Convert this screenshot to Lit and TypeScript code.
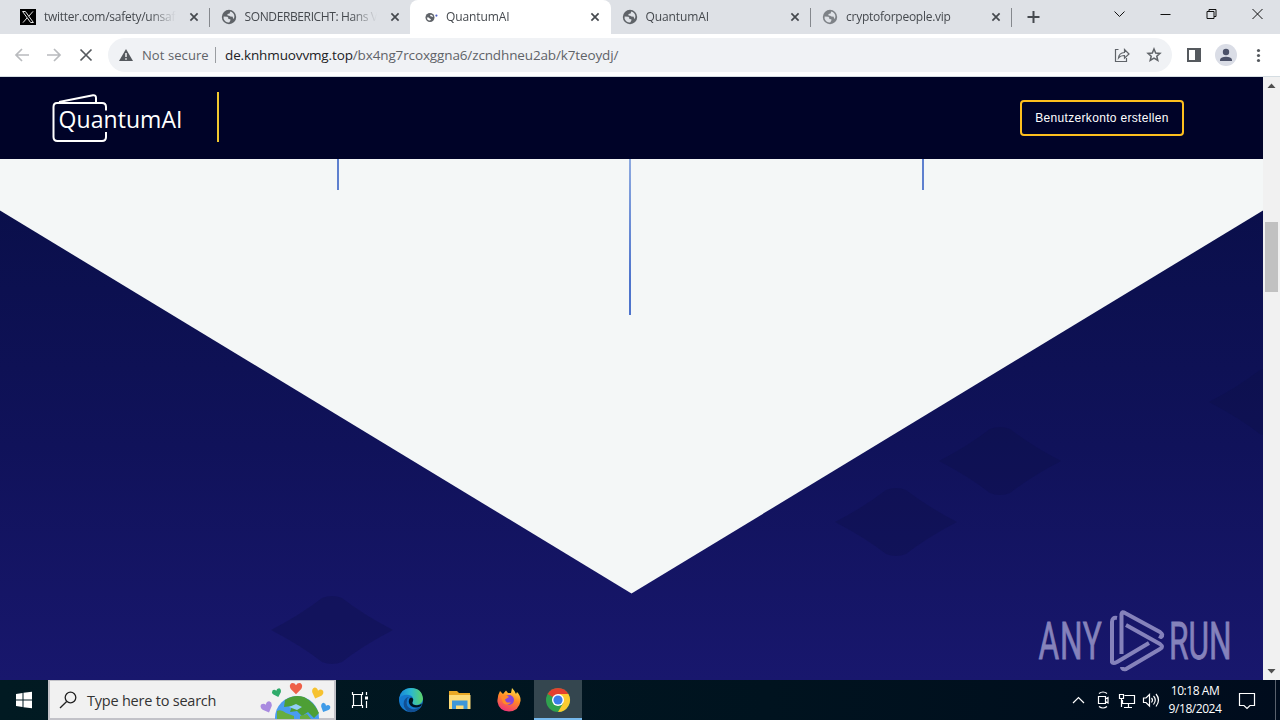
import { LitElement, css, html, svg, nothing } from 'lit';
import { customElement, property } from 'lit/decorators.js';
import { classMap } from 'lit/directives/class-map.js';

const globe = html`
  <svg class="icon" width="16" height="16" viewBox="0 0 16 16">
    <circle cx="8" cy="8" r="7.2" fill="#5f6368" />
    <path
      d="M2.6 7.6 L6.4 7.8 Q7.6 8.6 7.4 10 L9.4 10.2 Q9.8 11.8 8.2 13.4 Q4 13.6 2.6 9.8 Z"
      fill="#dee1e6"
    />
    <path
      d="M9.2 2.6 Q12.6 3.4 13.4 7 Q13.4 9 12.6 10 Q11.6 9 11.8 7.8 L9.4 7.6 Q8.4 6.4 6.6 6.4 L6.4 5 L8.6 4.6 Z"
      fill="#dee1e6"
    />
  </svg>
`;

const xLogo = html`
  <svg class="icon" width="16" height="16" viewBox="0 0 16 16">
    <rect width="16" height="16" fill="#000" />
    <path d="M2.6 2.5 H5.4 L13.4 13.5 H10.6 Z" fill="#000" stroke="#fff" stroke-width="0.9" />
    <path d="M13 2.4 L8.8 7.2 M7 9 L3 13.6" stroke="#fff" stroke-width="0.9" />
  </svg>
`;

const loading = html`
  <svg class="icon" width="16" height="16" viewBox="0 0 16 16">
    <circle cx="6" cy="8.5" r="4.5" fill="#5f6368" />
    <path d="M2.8 8.6 L4.8 8.4 Q5.8 9 5.8 9.8 L7 10 Q6.6 11.6 5.6 11.6 Q3 11.2 2.8 8.6 Z" fill="#fff" />
    <path d="M6.8 5.4 Q9 6 9.2 8 L7.6 7.6 L6 7 Z" fill="#fff" />
    <circle cx="12.4" cy="6.6" r="1.1" fill="#4d5fc4" />
  </svg>
`;

@customElement('browser-tab')
export class BrowserTab extends LitElement {
  static styles = css`
    :host {
      display: block;
      width: 200.5px;
      height: 34px;
      flex: none;
    }
    .tab {
      box-sizing: border-box;
      display: flex;
      align-items: center;
      height: 34px;
      padding-left: 11px;
      color: #45494e;
    }
    .active {
      background: #fff;
      border-radius: 8px 8px 0 0;
      padding-left: 14px;
    }
    .active .title {
      width: 131px;
      margin-left: 6px;
    }
    .favicon {
      display: flex;
      flex: none;
    }
    .faded {
      opacity: 0.75;
    }
    .title {
      width: 132px;
      margin-left: 8px;
      white-space: nowrap;
      font: 12px/16px 'Open Sans', sans-serif;
      letter-spacing: var(--spacing, 0);
      -webkit-mask-image: linear-gradient(90deg, #000 80%, transparent);
    }
    .close {
      flex: none;
      margin-left: 13px;
    }
    .divider {
      width: 1px;
      height: 19px;
      margin-left: 10px;
      background: #85888d;
    }
  `;

  @property()
  label = '';

  @property()
  kind = 'globe';

  @property({type: Boolean})
  active = false;

  @property({type: Boolean})
  divider = false;

  render() {
    const icon = this.kind === 'x' ? xLogo : this.kind === 'loading' ? loading : globe;
    return html`
      <div class="${classMap({tab: true, active: this.active})}">
        <span class="${classMap({favicon: true, faded: this.kind === 'dim'})}">${icon}</span>
        <span class="title">${this.label}</span>
        <svg class="close" width="10" height="10" viewBox="0 0 10 10">
          <path d="M1.4 1.4 L8.6 8.6 M8.6 1.4 L1.4 8.6" stroke="#45494e" stroke-width="1.7" />
        </svg>
        ${this.divider ? html`<span class="divider"></span>` : nothing}
      </div>
    `;
  }
}

@customElement('browser-chrome')
export class BrowserChrome extends LitElement {
  static styles = css`
    :host {
      display: block;
      font-family: 'Open Sans', sans-serif;
    }
    .strip {
      display: flex;
      height: 34px;
      padding-left: 9px;
      background: #dee1e6;
    }
    .loose {
      --spacing: -0.1px;
    }
    .tight {
      --spacing: -0.26px;
    }
    .tighter {
      --spacing: -0.38px;
    }
    .controls {
      flex: 1;
    }
    .toolbar {
      box-sizing: border-box;
      display: flex;
      align-items: center;
      height: 43px;
      background: #fff;
      border-bottom: 1px solid #d5dde2;
    }
    .nav {
      width: 108px;
      height: 42px;
      flex: none;
    }
    .omnibox {
      box-sizing: border-box;
      display: flex;
      align-items: center;
      width: 1064px;
      height: 34px;
      padding: 0 10px;
      border-radius: 17px;
      background: #f0f2f5;
      color: #5f6368;
      line-height: 20px;
      white-space: nowrap;
    }
    .secure {
      width: 67px;
      margin-left: 8px;
      font-size: 13px;
      letter-spacing: 0.08px;
    }
    .bar {
      width: 1px;
      height: 16px;
      margin: 0 9px 0 6px;
      background: #9a9da1;
    }
    .url {
      flex: 1;
      font-size: 13.5px;
      letter-spacing: -0.13px;
    }
    .host {
      color: #202124;
    }
    .tools {
      flex: none;
    }
  `;

  render() {
    return html`
      <div class="strip">
        <browser-tab class="tight" kind="x" label="twitter.com/safety/unsaf" divider></browser-tab>
        <browser-tab class="tighter" label="SONDERBERICHT: Hans V"></browser-tab>
        <browser-tab class="loose" kind="loading" label="QuantumAI" active></browser-tab>
        <browser-tab class="loose" label="QuantumAI" divider></browser-tab>
        <browser-tab class="tight" kind="dim" label="cryptoforpeople.vip" divider></browser-tab>
        <svg class="controls" height="34" viewBox="1011.5 0 268.5 34" fill="none" stroke="#111" stroke-width="1">
          <path d="M1027 17 H1039 M1033 11 V23" stroke="#45494e" stroke-width="2" />
          <path d="M1114 11.5 L1119 16.5 L1124 11.5" />
          <path d="M1160 14.5 H1170" />
          <path d="M1206.5 11.5 H1213.5 V18.5 H1206.5 Z M1208.5 11.5 V9.5 H1215.5 V16.5 H1213.5" />
          <path d="M1252 9 L1262 19 M1262 9 L1252 19" />
        </svg>
      </div>
      <div class="toolbar">
        <svg class="nav" viewBox="0 34 108 42" fill="none" stroke="#b9bbbe" stroke-width="1.7">
          <path d="M29 55 H16 M22 49 L16 55 L22 61" />
          <path d="M47 55 H60 M54 49 L60 55 L54 61" />
          <path d="M80.5 49.5 L91.5 60.5 M91.5 49.5 L80.5 60.5" stroke="#55595e" />
        </svg>
        <div class="omnibox">
          <svg width="16" height="16" viewBox="0 0 16 16">
            <path d="M8 2 L15 14 H1 Z" fill="#55595e" />
            <path d="M8 6 V10 M8 11.2 V12.8" stroke="#fff" stroke-width="1.4" />
          </svg>
          <span class="secure">Not secure</span>
          <span class="bar"></span>
          <span class="url"><span class="host">de.knhmuovvmg.top</span>/bx4ng7rcoxggna6/zcndhneu2ab/k7teoydj/</span>
          <svg class="tools" width="48" height="20" viewBox="1114 45 48 20" fill="none" stroke="#5f6368" stroke-width="1.2">
            <path d="M1118.5 49.5 H1115.5 V61.5 H1126.5 V58" />
            <path d="M1118.5 58 Q1119 52.8 1124.5 52.5 V49.5 L1129 54 L1124.5 58.2 V55.5 Q1120.5 55.3 1118.5 58 Z" />
            <path
              d="M1154 49 L1155.7 53 L1160 53.4 L1156.8 56.2 L1157.8 60.5 L1154 58.2 L1150.2 60.5 L1151.2 56.2 L1148 53.4 L1152.3 53 Z"
              stroke-width="1.5"
            />
          </svg>
        </div>
        <svg width="108" height="42" viewBox="1172 34 108 42">
          <path d="M1188 49 H1200 V61 H1188 Z" fill="none" stroke="#55595e" stroke-width="2" />
          <rect x="1195" y="49" width="5" height="12" fill="#55595e" />
          <circle cx="1226" cy="55" r="11" fill="#dadde6" />
          <circle cx="1226" cy="52" r="3.2" fill="#4b5168" />
          <path d="M1220 61 V59.5 Q1221 56.7 1226 56.7 Q1231 56.7 1232 59.5 V61 Z" fill="#4b5168" />
          <circle cx="1258.5" cy="50.5" r="1.6" fill="#55595e" />
          <circle cx="1258.5" cy="55.5" r="1.6" fill="#55595e" />
          <circle cx="1258.5" cy="60.5" r="1.6" fill="#55595e" />
        </svg>
      </div>
    `;
  }
}

// Centre points of the dark background rhombi
const rhombi = [[1000, 461], [896, 522], [332, 630], [1270, 402]];

@customElement('landing-page')
export class LandingPage extends LitElement {
  static styles = css`
    :host {
      display: flex;
      height: 603px;
    }
    .page {
      position: relative;
      width: 1263px;
      height: 603px;
      overflow: hidden;
    }
    .header {
      box-sizing: border-box;
      display: flex;
      align-items: center;
      justify-content: space-between;
      height: 82px;
      padding: 0 79px 0 49px;
      background: #000328;
    }
    .brand {
      display: flex;
      align-items: center;
      height: 50px;
      margin-bottom: 2px;
      padding-right: 34px;
      border-right: 2px solid #f0c72f;
    }
    .logo {
      display: block;
      font-family: 'Open Sans', sans-serif;
    }
    .button {
      box-sizing: border-box;
      width: 164px;
      height: 36px;
      padding: 0;
      border: 2px solid #fdbf1e;
      border-radius: 4px;
      background: transparent;
      color: #fff;
      font: 12px 'Liberation Sans', sans-serif;
      letter-spacing: 0.32px;
    }
    .scene {
      display: block;
    }
    .watermark {
      position: absolute;
      left: 1037px;
      top: 530px;
    }
    .scrollbar {
      box-sizing: border-box;
      display: flex;
      flex-direction: column;
      align-items: center;
      width: 17px;
      background: #f1f1f1;
    }
    .scrollbar svg {
      flex: none;
    }
    .thumb {
      width: 13px;
      height: 70px;
      flex: none;
      margin: 128px 0 371px;
      background: #c1c1c1;
    }
  `;

  render() {
    return html`
      <div class="page">
        <div class="header">
          <div class="brand">
            <svg class="logo" width="134" height="50" viewBox="49 92 134 50">
              <g fill="none" stroke="#fff" stroke-width="2" stroke-linejoin="round">
                <path d="M106 110.5 V107 Q106 103 102 103 H57 Q53.5 103 53.5 107 V137 Q53.5 141 57.5 141 H102 Q106 141 106 137 V132" />
                <path d="M59 102 L93 95.2 Q96 94.8 96 98 V102" />
              </g>
              <text x="58.5" y="128" font-size="23" textLength="124" fill="#fff">QuantumAI</text>
            </svg>
          </div>
          <button class="button">Benutzerkonto erstellen</button>
        </div>
        <svg class="scene" width="1263" height="521" viewBox="0 159 1263 521">
          <defs>
            <linearGradient id="night" x1="0" y1="0" x2="0" y2="1">
              <stop offset="0.1" stop-color="#0a0f4b" />
              <stop offset="0.55" stop-color="#10125a" />
              <stop offset="1" stop-color="#18176d" />
            </linearGradient>
            <linearGradient id="beam" gradientUnits="userSpaceOnUse" x1="0" y1="159" x2="0" y2="280">
              <stop offset="0" stop-color="#8daae0" />
              <stop offset="1" stop-color="#4e74cc" />
            </linearGradient>
          </defs>
          <rect y="159" width="1263" height="521" fill="url(#night)" />
          ${rhombi.map(([x, y]) => svg`
            <path
              d="M${x - 61} ${y} Q${x - 32} ${y - 15} ${x - 10} ${y - 32} Q${x} ${y - 36} ${x + 10} ${y - 32} Q${x + 32} ${y - 15} ${x + 61} ${y} Q${x + 32} ${y + 15} ${x + 10} ${y + 32} Q${x} ${y + 36} ${x - 10} ${y + 32} Q${x - 32} ${y + 15} ${x - 61} ${y} Z"
              fill="#0c0f45" fill-opacity="0.33"
            />
          `)}
          <polygon points="0,159 1263,159 1263,210.5 631.5,593.5 0,210.5" fill="#f4f7f7" />
          <rect x="337" y="159" width="2" height="31" fill="#5e80cf" />
          <rect x="629" y="159" width="2" height="156" fill="url(#beam)" />
          <rect x="922" y="159" width="2" height="31" fill="#5e80cf" />
        </svg>
        <svg class="watermark" width="196" height="66" viewBox="1037 607 196 66" fill="none" stroke="#8582bb" stroke-width="4">
          <g fill="#8582bb" stroke="#8582bb" stroke-width="0.8" font-family="Roboto, sans-serif" font-size="51">
            <text transform="translate(1038.5 659) scale(0.62 1)" textLength="102">ANY</text>
            <text transform="translate(1169 659) scale(0.62 1)" textLength="101">RUN</text>
          </g>
          <g stroke-linejoin="round">
            <path d="M1117 618 Q1112 617 1112 622 V662 Q1113 664 1117 662 L1149 643" />
            <path d="M1121.5 654 V614 Q1122 611 1125 613 L1160 632 Q1164 635 1161 637 L1159 636" />
            <path d="M1126 625 L1160 644 Q1164 647 1160 649 L1126 669 Q1122 670 1122 667" />
          </g>
        </svg>
      </div>
      <div class="scrollbar">
        <svg width="17" height="17" viewBox="0 0 17 17"><path d="M8.5 6.5 L12.5 11 H4.5 Z" fill="#505050" /></svg>
        <span class="thumb"></span>
        <svg width="17" height="17" viewBox="0 0 17 17"><path d="M8.5 10.5 L12.5 6 H4.5 Z" fill="#505050" /></svg>
      </div>
    `;
  }
}

const heart = (x: number, y: number, size: number, turn: number, color: string) => svg`
  <path
    transform="translate(${x} ${y}) rotate(${turn}) scale(${size})"
    d="M0 5.5 L-5 0.5 Q-7 -3 -4.5 -5 Q-1.5 -6 0 -3 Q1.5 -6 4.5 -5 Q7 -3 5 0.5 Z"
    fill="${color}"
  />
`;

@customElement('task-bar')
export class TaskBar extends LitElement {
  static styles = css`
    :host {
      display: flex;
      height: 40px;
      background: linear-gradient(90deg, #011a22, #00131f 60%, #000c1d);
      font-family: 'Open Sans', sans-serif;
    }
    .start {
      width: 48px;
      height: 40px;
      flex: none;
    }
    .search {
      box-sizing: border-box;
      display: flex;
      align-items: center;
      width: 288px;
      height: 40px;
      border: 2px solid #c2c2c8;
      border-top-width: 1px;
      background: #f1f1f1;
      color: #333;
      font-size: 14.5px;
    }
    .lens {
      margin: 2px 9px 0 9px;
    }
    .prompt {
      flex: 1;
      padding-top: 2px;
      white-space: nowrap;
      letter-spacing: -0.22px;
    }
    .apps {
      flex: none;
    }
    .tray {
      flex: none;
      margin-left: auto;
    }
    .clock {
      width: 58px;
      margin-right: 10px;
      color: #fff;
      font-size: 12px;
      line-height: 18px;
      letter-spacing: -0.45px;
      text-align: center;
      padding-top: 2px;
    }
  `;

  render() {
    return html`
      <svg class="start" viewBox="0 680 48 40" fill="#fff">
        <path d="M16 694 L22.5 693 V699.5 H16 Z M23.5 692.8 L32 691.7 V699.5 H23.5 Z M16 700.5 H22.5 V707 L16 706 Z M23.5 700.5 H32 V708.3 L23.5 707.2 Z" />
      </svg>
      <div class="search">
        <svg class="lens" width="19" height="19" viewBox="59 691 19 19" fill="none" stroke="#222" stroke-width="1.3">
          <circle cx="70.5" cy="697.5" r="5.3" />
          <path d="M66.7 701.5 L60 708" />
        </svg>
        <span class="prompt">Type here to search</span>
        <svg width="74" height="38" viewBox="260 681 74 38">
          <circle cx="297" cy="718" r="22" fill="#4a9cf0" />
          <path d="M285 700 Q294 694 304 697 Q314 702 319 713 L314 718 L308 712 L302 716 L297 711 L290 712 L292 706 L284 707 Z" fill="#4d9f35" />
          <path d="M277 711 Q281 709 286 713 L294 716 V719 H277 Z M300 716 L307 714 L311 719 H300 Z" fill="#67ad40" />
          <path d="M289 707 L296 704 L302 707 L297 710 Z" fill="#93cff7" />
          ${heart(296, 688.5, 1.05, 0, '#ee6048')}
          ${heart(277, 693, 0.78, -18, '#2faa6a')}
          ${heart(317, 693.5, 0.98, 20, '#f6c22f')}
          ${heart(267, 707.5, 0.98, -22, '#a98be0')}
          ${heart(325, 708, 0.8, 25, '#3f9be8')}
        </svg>
      </div>
      <svg class="apps" width="248" height="40" viewBox="336 680 248 40">
        <defs>
          <linearGradient id="edge" x1="0" y1="0" x2="1" y2="0">
            <stop offset="0" stop-color="#1685d9" />
            <stop offset="0.5" stop-color="#2bb8d0" />
            <stop offset="1" stop-color="#5dd465" />
          </linearGradient>
          <linearGradient id="fire" x1="0.7" y1="0" x2="0.3" y2="1">
            <stop offset="0" stop-color="#ffe047" />
            <stop offset="0.45" stop-color="#ff8a24" />
            <stop offset="1" stop-color="#f0307c" />
          </linearGradient>
        </defs>
        <g fill="none" stroke="#fff" stroke-width="1.2">
          <path d="M352.5 692 V694.5 H362.5 V692 M352.5 708 V705.5 H362.5 V708 M353.5 694.5 V705.5 M361.5 694.5 V705.5 M366.5 692 V695 M366.5 701 V708" />
          <path d="M365 698 H368" stroke-width="3" />
        </g>
        <circle cx="411" cy="700" r="12" fill="#1479ce" />
        <path d="M399 699 Q401 688 411 688 Q422 688 423 699 Q422 705 415 705 Q411 704 413 701 Q414 696 409 695 Q402 694 399 699 Z" fill="url(#edge)" />
        <path d="M407 700 Q405 707 412 709 Q417 710 422 706 Q417 713 409 712 Q402 708 404 701 Q406 697 409 697 Q407 698 407 700 Z" fill="#114f93" />
        <path d="M409 700 Q409 698 411 697.5 Q414 698 413 701 Q411 704 415 705 Q419 706 422 703.5 L421 706 Q416 709 411 706 Q408 703 409 700 Z" fill="#00131f" />
        <path d="M449 691 H457 L459 693 H470 V708 H449 Z" fill="#e9a825" />
        <path d="M449 695 H470.5 V709 H449 Z" fill="#fddb78" />
        <path d="M452 709 V700.5 H467.5 V709 H463.5 V705.5 H456 V709 Z" fill="#3e97d8" />
        <path
          d="M500 691 L503 694 L506 690.5 L508 693 L511 693 L512 688 Q515 691 516 694 L517 692 Q521 696 520.5 701 Q519 711 509 711.5 Q499 711 497.5 702 Q497 696 500 691 Z"
          fill="url(#fire)"
        />
        <circle cx="509" cy="700" r="5" fill="#8745d8" />
        <path d="M501 697 Q505 693 509 697 L505 699.5 Q506 704 511 702 Q508 707 503 703 Z" fill="#ff8a28" />
        <rect x="534" y="680" width="48" height="40" fill="#34464f" />
        <rect x="534" y="718" width="48" height="2" fill="#76b9ed" />
        <circle cx="558" cy="700" r="12" fill="#30a14e" />
        <path d="M558 700 L547.6 694 A12 12 0 0 1 568.4 694 Z" fill="#e4402f" />
        <path d="M558 694 H568.4 A12 12 0 0 1 558 712 L563.2 703 Z" fill="#fccb30" />
        <circle cx="558" cy="700" r="6" fill="#fff" />
        <circle cx="558" cy="700" r="4.6" fill="#3a7de9" />
      </svg>
      <svg class="tray" width="100" height="40" viewBox="1066 680 100 40" fill="none" stroke="#fff" stroke-width="1.2">
        <path d="M1073 703 L1078.5 697.5 L1084 703" />
        <path d="M1098.5 696.5 H1105.5 V703.5 H1098.5 Z M1105.5 699 L1108 697.5 V703 L1105.5 701.5 M1099 693.5 Q1103 690.5 1107 693.5 M1099 706.5 Q1103 709.5 1107 706.5" />
        <path d="M1124.5 695.5 H1134.5 V703.5 H1122.5 V700 M1119.5 694.5 H1123.5 V698.5 H1119.5 Z M1121.5 698.5 V707 M1128.5 704 V707 M1124 707.5 H1132" />
        <path d="M1143.5 698 H1146 L1149.5 694.5 V706 L1146 702.5 H1143.5 Z M1151.5 698 Q1153.5 700 1151.5 702.5 M1153.5 696 Q1157 700 1153.5 704.5 M1156 694 Q1161 700 1156 706.5" />
      </svg>
      <div class="clock">10:18 AM<br />9/18/2024</div>
      <svg width="46" height="40" viewBox="1234 680 46 40" fill="none" stroke="#fff" stroke-width="1.2">
        <path d="M1239.5 693.5 H1254.5 V705.5 H1250 L1247 708.5 L1244 705.5 H1239.5 Z" />
        <path d="M1275.5 680 V720" stroke="#59616d" stroke-width="1" />
      </svg>
    `;
  }
}

@customElement('app-root')
export class AppRoot extends LitElement {
  static styles = css`
    :host {
      display: flex;
      flex-direction: column;
      width: 1280px;
      height: 720px;
      overflow: hidden;
    }
  `;

  render() {
    return html`
      <browser-chrome></browser-chrome>
      <landing-page></landing-page>
      <task-bar></task-bar>
    `;
  }
}
